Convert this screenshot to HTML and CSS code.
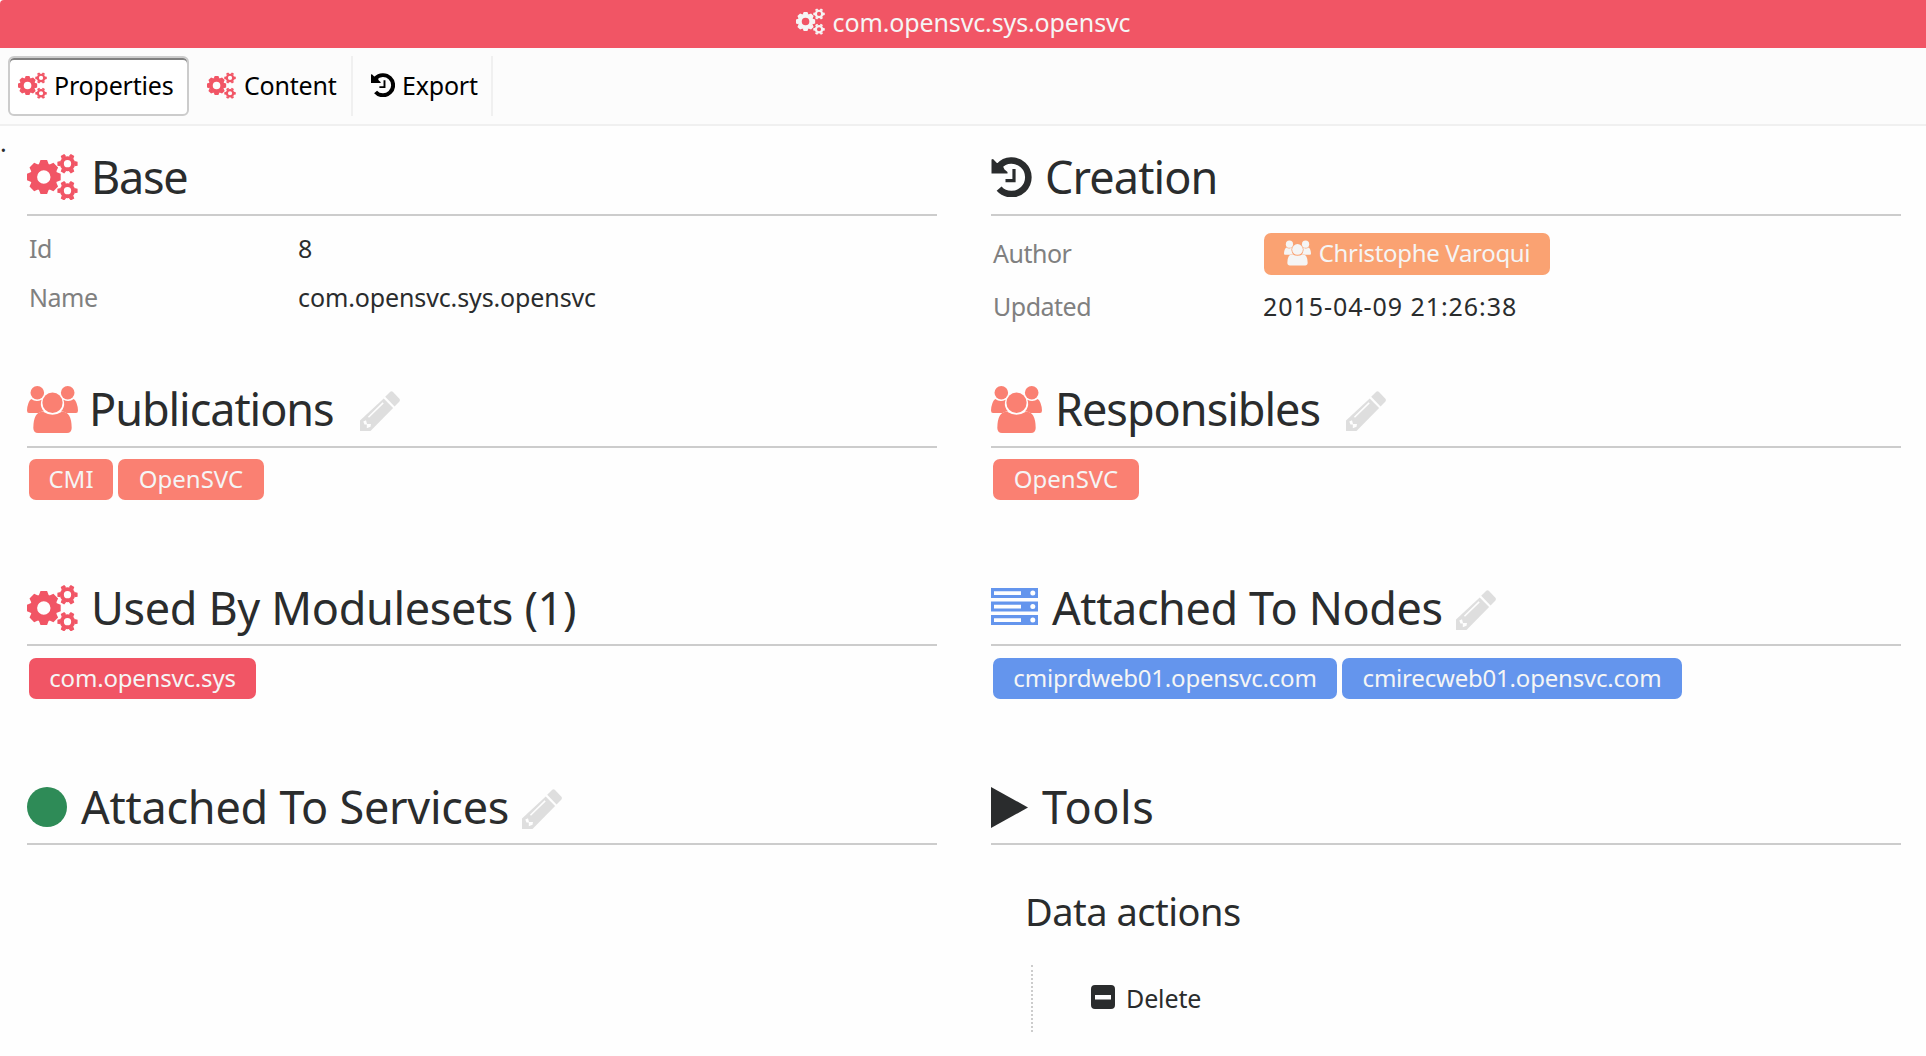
FILE: index.html
```html
<!DOCTYPE html>
<html lang="en">
<head>
<meta charset="utf-8">
<title>com.opensvc.sys.opensvc</title>
<link rel="stylesheet" href="styles.css">
</head>
<body>
<svg class="defs" aria-hidden="true">
  <symbol id="gears" viewBox="0 0 51 46">
    <g transform="translate(16.8 23)">
      <circle r="10.2" fill="none" stroke="currentColor" stroke-width="7"/>
      <g id="teeth-pair"><path d="M-5-12.5-3.3-16.9H3.3L5-12.5ZM-5 12.5-3.3 16.9H3.3L5 12.5Z"/></g>
      <use href="#teeth-pair" transform="rotate(45)"/>
      <use href="#teeth-pair" transform="rotate(90)"/>
      <use href="#teeth-pair" transform="rotate(135)"/>
    </g>
    <g id="small-gear" transform="translate(40.5 9.7)">
      <circle r="5.6" fill="none" stroke="currentColor" stroke-width="3.9"/>
      <g id="small-pair"><path d="M-7-2.6-10.1-2V2L-7 2.6ZM7-2.6 10.1-2V2L7 2.6Z"/></g>
      <use href="#small-pair" transform="rotate(60)"/>
      <use href="#small-pair" transform="rotate(120)"/>
    </g>
    <use href="#small-gear" y="27"/>
  </symbol>
  <symbol id="history" viewBox="0 0 40 40">
    <path d="M7.5 9.2A16.8 16.8 0 1 1 7.6 31.6" fill="none" stroke="currentColor" stroke-width="6.6"/>
    <path d="M0 2.4 1.5 2 5.4 6 10 6.2 13 12.5 16 15V16.5H0Z"/>
    <path d="M22.5 12V23.6H14" fill="none" stroke="currentColor" stroke-width="3.2"/>
  </symbol>
  <symbol id="users" viewBox="0 0 51 47">
    <ellipse cx="10.3" cy="6.8" rx="6.8" ry="6.8"/>
    <ellipse cx="40.7" cy="6.8" rx="6.8" ry="6.8"/>
    <ellipse cx="25.5" cy="16.8" rx="10.1" ry="10.2"/>
    <path d="M4.2 13Q9 16.8 14.6 13.8 12.6 19 15.6 23.800L17.2 25.6Q14 25 11.5 27H2Q0 27 0 24.500Q.5 16 4.200 13Z"/>
    <path d="M46.800 13Q42 16.800 36.400 13.800 38.400 19 35.400 23.800L33.800 25.600Q37 25 39.500 27H49Q51 27 51 24.500 50.500 16 46.800 13Z"/>
    <path d="M16 25.800Q25.500 31.600 35 25.800 44.500 25.500 44.700 42 44.500 47 40 47H11Q6.500 47 6.300 42 6.500 25.500 16 25.800Z"/>
  </symbol>
  <symbol id="pencil" viewBox="0 0 40 40">
    <path d="M25.200 5.800 30 .900Q31.500-.500 33 .900L39.200 7.500Q40.600 9.200 39.200 10.800L34.600 15.600Z"/>
    <path fill-rule="evenodd" d="M23.700 7.400 33.100 17.100 10.500 40H0V29.500ZM7.900 25.700 9 26.800 23.700 12.400 22.600 11.200ZM3.300 30.400 6 29.200 7 33H11L10.500 35.800 6.800 37.200V33.400H4.500Z"/>
  </symbol>
  <symbol id="server" viewBox="0 0 47 37">
    <path fill-rule="evenodd" d="M0 0H47V10H0ZM3 3.300V6.900H30V3.300ZM0 13.500H47V23.500H0ZM3 16.800V20.400H30V16.800ZM0 27H47V37H0ZM3 30.300V33.900H30V30.300Z"/>
    <g fill="#fff"><circle cx="41.800" cy="5" r="2.500"/><circle cx="41.800" cy="18.500" r="2.500"/><circle cx="41.800" cy="32" r="2.500"/></g>
  </symbol>
  <symbol id="minus" viewBox="0 0 24 24">
    <path fill-rule="evenodd" d="M4 0H20Q24 0 24 4V20Q24 24 20 24H4Q0 24 0 20V4Q0 0 4 0ZM4 10V14.500H20V10Z"/>
  </symbol>
</svg>

<header class="titlebar">
  <svg class="ico-gears-sm"><use href="#gears"/></svg>
  <span>com.opensvc.sys.opensvc</span>
</header>

<nav class="tabs">
  <button class="tab tab-active"><svg class="ico-gears-sm red"><use href="#gears"/></svg><span>Properties</span></button>
  <button class="tab tab-content"><svg class="ico-gears-sm red"><use href="#gears"/></svg><span>Content</span></button>
  <button class="tab tab-export"><svg class="ico-history-sm"><use href="#history"/></svg><span>Export</span></button>
</nav>

<div class="dot">.</div>

<main class="panels">
  <section>
    <div class="head"><svg class="ico-gears red"><use href="#gears"/></svg><h2 class="h-base">Base</h2></div>
    <dl class="props">
      <dt>Id</dt><dd>8</dd>
      <dt>Name</dt><dd>com.opensvc.sys.opensvc</dd>
    </dl>
  </section>
  <section>
    <div class="head"><svg class="ico-history"><use href="#history"/></svg><h2 class="h-creation">Creation</h2></div>
    <dl class="props props-creation">
      <dt>Author</dt><dd><span class="tag tag-user"><svg class="ico-users-sm"><use href="#users"/></svg><span>Christophe Varoqui</span></span></dd>
      <dt>Updated</dt><dd class="date">2015-04-09 21:26:38</dd>
    </dl>
  </section>
  <section>
    <div class="head"><svg class="ico-users"><use href="#users"/></svg><h2 class="h-publications">Publications</h2><svg class="ico-pencil"><use href="#pencil"/></svg></div>
    <div class="tags"><span class="tag tag-group w-cmi">CMI</span><span class="tag tag-group w-osvc">OpenSVC</span></div>
  </section>
  <section>
    <div class="head"><svg class="ico-users"><use href="#users"/></svg><h2 class="h-responsibles">Responsibles</h2><svg class="ico-pencil"><use href="#pencil"/></svg></div>
    <div class="tags"><span class="tag tag-group w-osvc">OpenSVC</span></div>
  </section>
  <section class="low">
    <div class="head"><svg class="ico-gears red"><use href="#gears"/></svg><h2 class="h-modulesets">Used By Modulesets (1)</h2></div>
    <div class="tags"><span class="tag tag-modset w-sys">com.opensvc.sys</span></div>
  </section>
  <section class="low">
    <div class="head"><svg class="ico-server"><use href="#server"/></svg><h2 class="h-nodes">Attached To Nodes</h2><svg class="ico-pencil"><use href="#pencil"/></svg></div>
    <div class="tags"><span class="tag tag-node w-prd">cmiprdweb01.opensvc.com</span><span class="tag tag-node w-rec">cmirecweb01.opensvc.com</span></div>
  </section>
  <section class="low">
    <div class="head"><span class="ico-circle"></span><h2 class="h-services">Attached To Services</h2><svg class="ico-pencil"><use href="#pencil"/></svg></div>
  </section>
  <section class="low">
    <div class="head"><svg class="ico-play" viewBox="0 0 37 41"><path d="M0 0 37 20.500 0 41Z"/></svg><h2 class="h-tools">Tools</h2></div>
    <div class="tools">
      <h3>Data actions</h3>
      <div class="actions"><svg class="ico-minus"><use href="#minus"/></svg><span>Delete</span></div>
    </div>
  </section>
</main>
</body>
</html>
```
FILE: styles.css
```css
* { box-sizing: border-box; }
html { background: #fefefe; }
body {
  margin: 0;
  height: 1056px;
  overflow: hidden;
  font: 25px/40px "Noto Sans", "Open Sans", sans-serif;
  letter-spacing: -0.12px;
  color: #2a2c2d;
}
svg { fill: currentColor; flex: none; display: block; }
.defs { position: absolute; width: 0; height: 0; }
.red { color: #f15565; }

.titlebar {
  height: 48px;
  background: #f15565;
  border-top-left-radius: 4px;
  color: #f5f5f5;
  display: flex;
  justify-content: center;
  align-items: flex-start;
  gap: 8px;
}
.titlebar svg { margin-top: 8px; }
.titlebar span { line-height: 44px; }
.ico-gears-sm { width: 29px; height: 27px; }

.tabs {
  height: 78px;
  padding: 8px 8px 0;
  background: #fcfcfc;
  border-bottom: 2px solid #f0f0f0;
  display: flex;
}
.tab {
  height: 60px;
  border: 0 solid #f0f0f0;
  padding: 0;
  background: none;
  font: inherit;
  letter-spacing: -0.2px;
  color: #000;
  display: flex;
  align-items: flex-start;
}
.tab svg { margin-top: 16px; }
.tab span { line-height: 59px; }
.tab-active {
  width: 181px;
  padding-left: 8px;
  gap: 7px;
  border: 2px solid #ccc;
  border-radius: 6px;
  background: #fff;
  box-shadow: inset 0 2px 0 #808080;
}
.tab-active svg { margin-top: 14px; }
.tab-active span { line-height: 55px; }
.tab-content { width: 164px; padding-left: 18px; gap: 8px; border-right-width: 2px; }
.tab-export { width: 140px; padding-left: 18px; gap: 7px; border-right-width: 2px; }
.tab .ico-history-sm { width: 24px; height: 24px; margin-top: 17px; }

.dot { height: 28px; line-height: 32px; }

.panels {
  display: grid;
  grid-template-columns: 910px 910px;
  grid-template-rows: 232px 199px 199px 270px;
  column-gap: 54px;
  padding-left: 27px;
}
.head {
  height: 62px;
  border-bottom: 2px solid #ccc;
  display: flex;
  align-items: flex-start;
}
.low .head { height: 61px; }
h2 { margin: 0; font-size: 45px; font-weight: 400; line-height: 46px; white-space: nowrap; }
.ico-gears { width: 51px; height: 46px; }
.ico-history { width: 41px; height: 40px; margin-top: 3px; }
.ico-users { width: 51px; height: 47px; color: #fa8072; }
.ico-server { width: 47px; height: 37px; margin-top: 3px; color: #6495ed; }
.ico-circle { width: 40px; height: 40px; margin-top: 3px; border-radius: 50%; background: #2e8b57; flex: none; }
.ico-play { width: 37px; height: 41px; margin-top: 3px; }
.ico-pencil { width: 40px; height: 40px; margin-top: 5px; color: #dedede; }
.h-base { margin-left: 13px; letter-spacing: -1.3px; }
.h-creation { margin-left: 13px; letter-spacing: -0.9px; }
.h-publications { margin-left: 11px; width: 271px; letter-spacing: -1.05px; }
.h-responsibles { margin-left: 13px; width: 291px; letter-spacing: -1px; }
.h-modulesets { margin-left: 13px; letter-spacing: -0.35px; }
.h-nodes { margin-left: 14px; width: 404px; letter-spacing: -0.4px; }
.h-services { margin-left: 14px; width: 441px; letter-spacing: -0.25px; }
.h-tools { margin-left: 14px; letter-spacing: 0.6px; }

.props {
  margin: 0;
  padding: 12px 2px 0;
  display: grid;
  grid-template-columns: 269px 1fr;
  grid-template-rows: 40px 40px;
  row-gap: 9px;
}
.props dt { color: #808080; letter-spacing: -0.5px; }
.props dd { margin: 0; }
.props-creation { grid-template-columns: 271px 1fr; grid-template-rows: 44px 44px; padding-top: 17px; }
.date { letter-spacing: 0.95px; margin-left: -1px !important; }

.tags { display: flex; gap: 5px; padding: 11px 2px 0; }
.low .tags { padding-top: 12px; }
.tag {
  height: 41px;
  border-radius: 7px;
  color: #f5f5f5;
  font-size: 24px;
  line-height: 39px;
  letter-spacing: -0.2px;
  display: flex;
  justify-content: center;
  white-space: nowrap;
}
.tag-group { background: #fa8072; letter-spacing: 0; }
.tag-modset { background: #f15565; }
.tag-node { background: #6495ed; }
.tag-user { background: #faa272; width: 286px; height: 42px; gap: 8px; line-height: 40px; letter-spacing: -0.32px; }
.ico-users-sm { width: 27px; height: 26px; margin-top: 7px; }
.w-cmi { width: 84px; }
.w-osvc { width: 146px; }
.w-sys { width: 227px; }
.w-prd { width: 344px; }
.w-rec { width: 340px; }

.tools { padding: 41px 0 0 34px; }
h3 { margin: 0; font-size: 38px; font-weight: 400; line-height: 50px; letter-spacing: -0.5px; }
.actions {
  height: 67px;
  margin: 29px 0 0 6px;
  padding: 20px 0 0 58px;
  border-left: 2px dotted #ccc;
  display: flex;
  gap: 11px;
}
.ico-minus { width: 24px; height: 24px; }
.actions span { line-height: 26px; }
```
